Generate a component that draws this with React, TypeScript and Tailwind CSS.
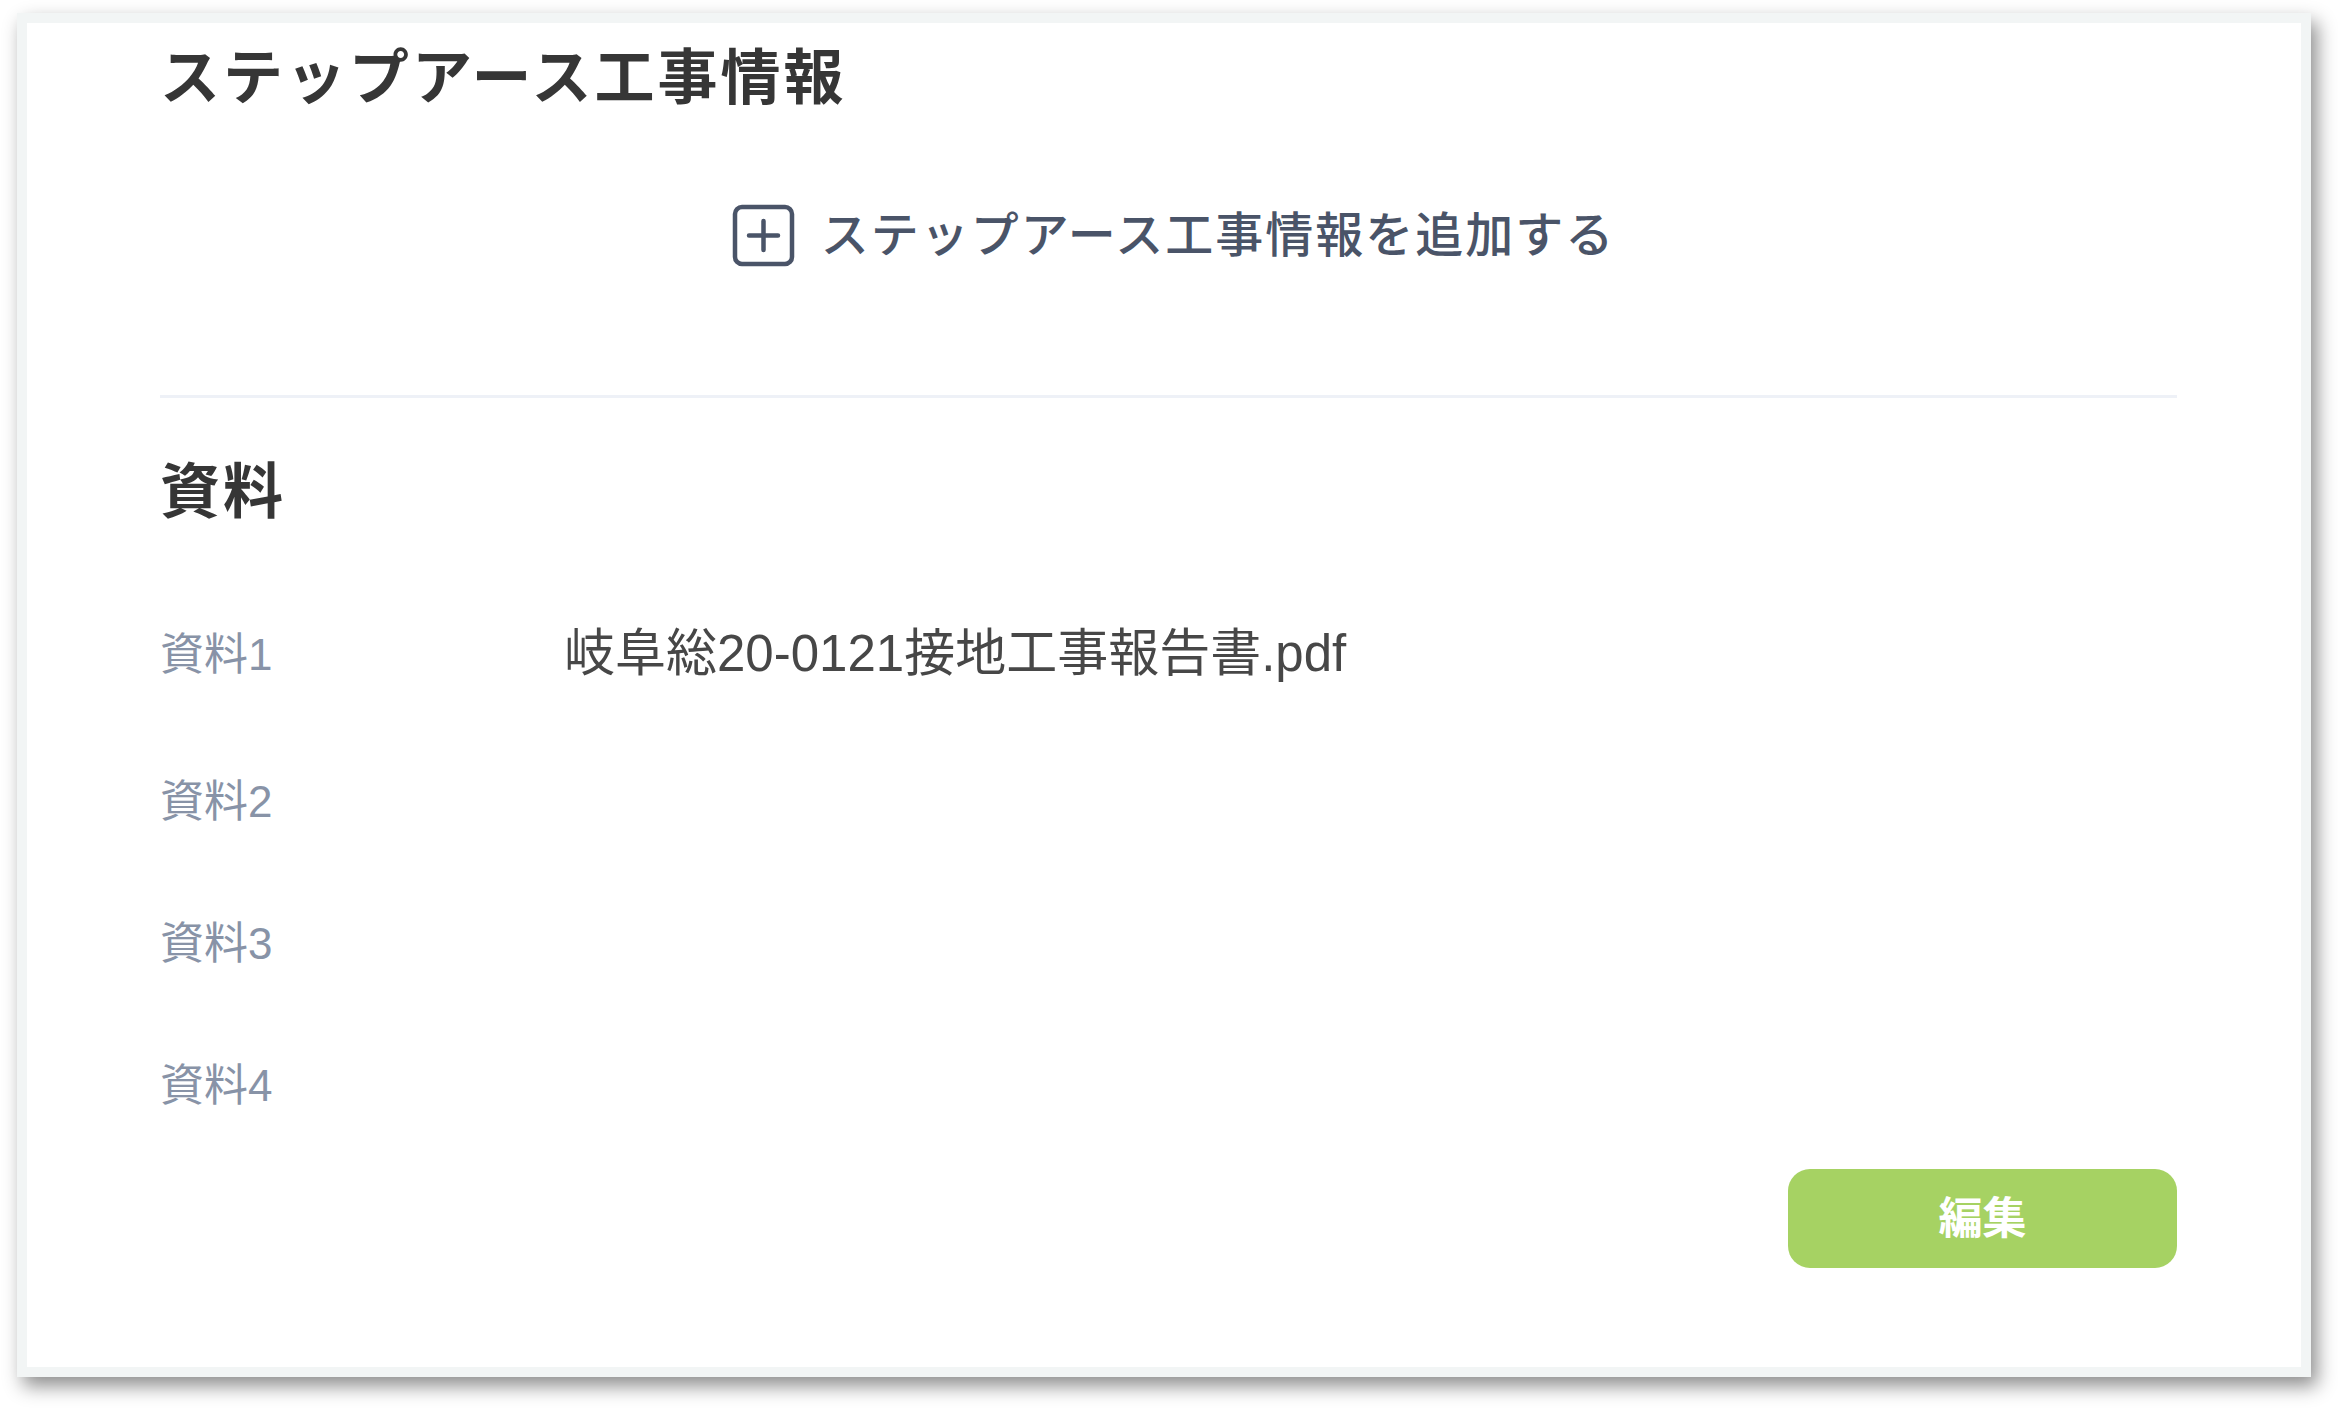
import React from 'react'

const FONT = { fontFamily: '"Liberation Sans", "Noto Sans CJK JP", sans-serif' }

const docs = [
  { label: '資料1', value: '岐阜総20-0121接地工事報告書.pdf' },
  { label: '資料2', value: '' },
  { label: '資料3', value: '' },
  { label: '資料4', value: '' },
]

function PlusBox() {
  return (
    <svg width="63" height="63" viewBox="0 0 63 63" fill="none" className="shrink-0">
      <rect x="3" y="3" width="57" height="57" rx="7" stroke="#4a5468" strokeWidth="4.5" />
      <path d="M31.5 17v29M17 31.5h29" stroke="#4a5468" strokeWidth="4.5" strokeLinecap="round" />
    </svg>
  )
}

export default function App() {
  return (
    <div className="min-h-screen w-full bg-white" style={FONT}>
      <div className="pl-[17px] pt-[13px]">
        <div className="w-[2294px] h-[1364px] border-[10px] border-[#f2f5f5] bg-white shadow-[6px_9px_18px_rgba(0,0,0,0.45)]">
          <div className="pl-[133px] pr-[124px] pt-[20px] flex flex-col">
            <h1 className="text-[60px] leading-[72px] font-bold text-[#363636] tracking-[3px]">
              ステップアース工事情報
            </h1>

            <div className="mt-[89px] flex justify-center">
              <button className="flex items-center gap-[26px] h-[63px] text-[#4a5468] text-[48px] font-medium tracking-[2px] pl-[10px]">
                <PlusBox />
                <span className="leading-none">ステップアース工事情報を追加する</span>
              </button>
            </div>

            <div className="mt-[128px] h-[3px] bg-[#eef1f7]" />

            <h2 className="mt-[59px] text-[60px] leading-[72px] font-bold text-[#363636] tracking-[3px]">資料</h2>

            <div className="mt-[49px] flex flex-col">
              {docs.map((d, i) => (
                <div key={d.label} className={`flex items-center ${i === 0 ? 'h-[153px]' : 'h-[142px]'}`}>
                  <div className="w-[404px] shrink-0 text-[44px] text-[#8893a7]">{d.label}</div>
                  <div className="text-[51px] text-[#474747]">{d.value}</div>
                </div>
              ))}
            </div>

            <div className="mt-[12px] flex justify-end">
              <button className="w-[389px] h-[99px] rounded-[22px] bg-[#a6d263] text-white text-[44px] font-bold">
                編集
              </button>
            </div>
          </div>
        </div>
      </div>
    </div>
  )
}
